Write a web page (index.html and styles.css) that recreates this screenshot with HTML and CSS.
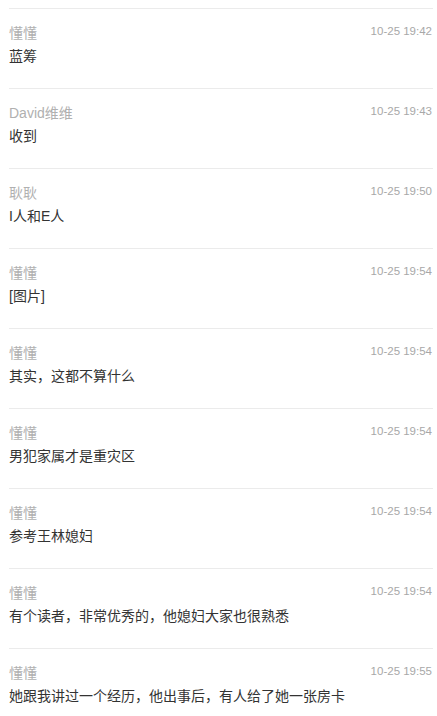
FILE: index.html
```html
<!DOCTYPE html>
<html lang="zh-CN">
<head>
  <meta charset="UTF-8">
  <meta name="viewport" content="width=device-width, initial-scale=1.0">
  <title>评论</title>
  <link rel="stylesheet" href="styles.css">
</head>
<body>
  <div class="comment-list">
    <div class="comment">
      <div class="comment-head"><span class="name">懂懂</span><span class="time">10-25 19:42</span></div>
      <p class="text">蓝筹</p>
    </div>
    <div class="comment">
      <div class="comment-head"><span class="name">David维维</span><span class="time">10-25 19:43</span></div>
      <p class="text">收到</p>
    </div>
    <div class="comment">
      <div class="comment-head"><span class="name">耿耿</span><span class="time">10-25 19:50</span></div>
      <p class="text">I人和E人</p>
    </div>
    <div class="comment">
      <div class="comment-head"><span class="name">懂懂</span><span class="time">10-25 19:54</span></div>
      <p class="text">[图片]</p>
    </div>
    <div class="comment">
      <div class="comment-head"><span class="name">懂懂</span><span class="time">10-25 19:54</span></div>
      <p class="text">其实，这都不算什么</p>
    </div>
    <div class="comment">
      <div class="comment-head"><span class="name">懂懂</span><span class="time">10-25 19:54</span></div>
      <p class="text">男犯家属才是重灾区</p>
    </div>
    <div class="comment">
      <div class="comment-head"><span class="name">懂懂</span><span class="time">10-25 19:54</span></div>
      <p class="text">参考王林媳妇</p>
    </div>
    <div class="comment">
      <div class="comment-head"><span class="name">懂懂</span><span class="time">10-25 19:54</span></div>
      <p class="text">有个读者，非常优秀的，他媳妇大家也很熟悉</p>
    </div>
    <div class="comment">
      <div class="comment-head"><span class="name">懂懂</span><span class="time">10-25 19:55</span></div>
      <p class="text">她跟我讲过一个经历，他出事后，有人给了她一张房卡</p>
    </div>
  </div>
</body>
</html>
```

FILE: styles.css
```css
body {
  margin: 0;
  padding: 8px 4px 0 9px;
  background-color: #fff;
  font-family: "Liberation Sans", "Noto Sans CJK SC", sans-serif;
}
.comment {
  border-top: 1px solid #ebebeb;
  padding: 14px 0 22px 0;
}
.comment-head {
  display: flex;
  justify-content: space-between;
  align-items: flex-start;
}
.name {
  font-size: 14px;
  line-height: 20px;
  color: #b0b0b0;
}
.time {
  font-size: 11.5px;
  line-height: 16px;
  color: #a8a8a8;
  margin-right: 1px;
}
.text {
  margin: 3px 0 0 0;
  font-size: 14px;
  line-height: 20px;
  color: #333;
}
```
